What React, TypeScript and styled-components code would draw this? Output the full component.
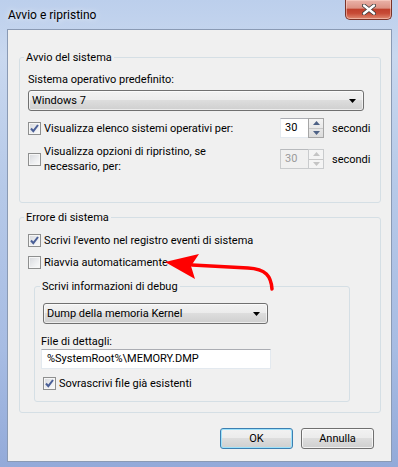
import styled, { createGlobalStyle } from 'styled-components';

const GlobalStyle = createGlobalStyle`
  html, body {
    margin: 0;
    padding: 0;
  }
  body {
    background: #ffffff;
    font-family: Roboto, "Liberation Sans", sans-serif;
    font-size: 11px;
    color: #000;
  }
`;

const Checkbox = ({ checked }: { checked?: boolean }) => (
    <StyledCheck>
        {checked && (
            <svg width="11" height="11" viewBox="0 0 11 11">
                <path d="M2 5.5 L4.3 8.2 L9 2" fill="none" stroke="#4a5f97" strokeWidth="2" />
            </svg>
        )}
    </StyledCheck>
);

const SpinBox = ({ value, disabled }: { value: string; disabled?: boolean }) => (
    <StyledSpin>
        <StyledSpinText $disabled={disabled}>{value}</StyledSpinText>
        <StyledSpinButtons $disabled={disabled}>
            <StyledSpinHalf>
                <svg width="7" height="4" viewBox="0 0 7 4">
                    <path d="M0 4 L3.5 0 L7 4 Z" fill={disabled ? '#c4c4c4' : '#4d6185'} />
                </svg>
            </StyledSpinHalf>
            <StyledSpinHalf>
                <svg width="7" height="4" viewBox="0 0 7 4">
                    <path d="M0 0 L7 0 L3.5 4 Z" fill={disabled ? '#c4c4c4' : '#4d6185'} />
                </svg>
            </StyledSpinHalf>
        </StyledSpinButtons>
    </StyledSpin>
);

const Combo = ({ text, width }: { text: string; width: number }) => (
    <StyledCombo $width={width}>
        <span>{text}</span>
        <svg width="7" height="4" viewBox="0 0 7 4">
            <path d="M0 0 L7 0 L3.5 4 Z" fill="#000" />
        </svg>
    </StyledCombo>
);

export default function App() {
    return (
        <>
            <GlobalStyle />
            <StyledWindow>
                <StyledTitleBar>
                    <StyledTitle>Avvio e ripristino</StyledTitle>
                    <StyledClose>
                        <svg width="14" height="11" viewBox="0 0 14 11">
                            <path d="M2 1.5 L12 9.5 M12 1.5 L2 9.5" stroke="#3a3a3a" strokeWidth="4" strokeLinecap="round" />
                            <path d="M2 1.5 L12 9.5 M12 1.5 L2 9.5" stroke="#ffffff" strokeWidth="2.4" strokeLinecap="round" />
                        </svg>
                    </StyledClose>
                </StyledTitleBar>

                <StyledClient>
                    <StyledGroup $mt={20} $pb={28}>
                        <StyledLegend>Avvio del sistema</StyledLegend>
                        <StyledLine $mt={7}>Sistema operativo predefinito:</StyledLine>
                        <StyledComboWrap $mt={3}>
                            <Combo text="Windows 7" width={336} />
                        </StyledComboWrap>
                        <StyledSpinRow $mt={7}>
                            <Checkbox checked />
                            <StyledRowLabel>Visualizza elenco sistemi operativi per:</StyledRowLabel>
                            <SpinBox value="30" />
                            <StyledUnit>secondi</StyledUnit>
                        </StyledSpinRow>
                        <StyledSpinRow $mt={6}>
                            <Checkbox />
                            <StyledRowLabel>
                                Visualizza opzioni di ripristino, se
                                <br />
                                necessario, per:
                            </StyledRowLabel>
                            <SpinBox value="30" disabled />
                            <StyledUnit>secondi</StyledUnit>
                        </StyledSpinRow>
                    </StyledGroup>

                    <StyledGroup $mt={7} $pb={10}>
                        <StyledLegend>Errore di sistema</StyledLegend>
                        <StyledCheckRow $mt={8}>
                            <Checkbox checked />
                            <span>Scrivi l'evento nel registro eventi di sistema</span>
                        </StyledCheckRow>
                        <StyledCheckRow $mt={7}>
                            <Checkbox />
                            <span>Riavvia automaticamente</span>
                        </StyledCheckRow>

                        <StyledInnerGroup>
                            <StyledLegend $inner>Scrivi informazioni di debug</StyledLegend>
                            <StyledComboWrap $mt={9} $ml={2}>
                                <Combo text="Dump della memoria Kernel" width={225} />
                            </StyledComboWrap>
                            <StyledLine $mt={10}>File di dettagli:</StyledLine>
                            <StyledTextField>%SystemRoot%\MEMORY.DMP</StyledTextField>
                            <StyledCheckRow $mt={7} $ml={2}>
                                <Checkbox checked />
                                <span>Sovrascrivi file già esistenti</span>
                            </StyledCheckRow>
                        </StyledInnerGroup>
                    </StyledGroup>

                    <StyledButtonBar>
                        <StyledButton $default>OK</StyledButton>
                        <StyledButton>Annulla</StyledButton>
                    </StyledButtonBar>
                </StyledClient>

                <StyledArrow width="120" height="45" viewBox="160 250 120 45">
                    <path d="M272 289 C271 276, 266 269, 248 268 L192 265" fill="none" stroke="#ff0000" strokeWidth="3.5" strokeLinecap="round" />
                    <path d="M165 262 L199 254 L191 266 L195 279 Z" fill="#ff0000" />
                </StyledArrow>
            </StyledWindow>
        </>
    );
}

const StyledWindow = styled.div`
    position: relative;
    box-sizing: border-box;
    width: 398px;
    height: 467px;
    padding: 0 6px 5px 7px;
    display: flex;
    flex-direction: column;
    background: linear-gradient(180deg, #bccfec 0%, #c9d8ef 12%, #b6c9e8 40%, #a7bce3 75%, #93aad9 100%);
`;

const StyledTitleBar = styled.div`
    height: 29px;
    display: flex;
    justify-content: space-between;
    align-items: flex-start;
`;

const StyledTitle = styled.div`
    margin: 8px 0 0 1px;
    line-height: 15px;
    font-size: 12px;
    color: #000;
    text-shadow: 0 0 6px rgba(255, 255, 255, 0.9);
`;

const StyledClose = styled.div`
    box-sizing: border-box;
    width: 47px;
    height: 20px;
    display: flex;
    align-items: center;
    justify-content: center;
    border: 1px solid #7a3328;
    border-top: none;
    border-radius: 0 0 5px 5px;
    background: linear-gradient(180deg, #eab3a9 0%, #dc9284 42%, #c0412d 50%, #c74b36 70%, #e08a71 100%);
    box-shadow: inset 0 0 0 1px rgba(255, 220, 210, 0.5);
`;

const StyledClient = styled.div`
    flex: 1;
    display: flex;
    flex-direction: column;
    background: #f0f0f0;
    border: 1px solid #8a9ab4;
    padding: 0 10px 0 11px;
`;

const StyledGroup = styled.fieldset<{ $mt: number; $pb: number }>`
    margin: ${p => p.$mt}px 0 0 0;
    padding: 0 16px ${p => p.$pb}px 8px;
    border: 1px solid #d5dfe5;
    border-radius: 3px;
    min-width: 0;
    display: flex;
    flex-direction: column;
`;

const StyledInnerGroup = styled.fieldset`
    margin: 9px 14px 0 6px;
    padding: 0 10px 10px 6px;
    border: 1px solid #d5dfe5;
    border-radius: 3px;
    min-width: 0;
    display: flex;
    flex-direction: column;
`;

const StyledLegend = styled.legend<{ $inner?: boolean }>`
    margin-left: ${p => (p.$inner ? -1 : -4)}px;
    padding: 0 2px;
    line-height: 15px;
`;

const StyledLine = styled.div<{ $mt: number }>`
    margin-top: ${p => p.$mt}px;
    line-height: 15px;
`;

const StyledComboWrap = styled.div<{ $mt: number; $ml?: number }>`
    margin-top: ${p => p.$mt}px;
    margin-left: ${p => p.$ml || 0}px;
`;

const StyledCombo = styled.div<{ $width: number }>`
    box-sizing: border-box;
    width: ${p => p.$width}px;
    height: 21px;
    display: flex;
    align-items: center;
    justify-content: space-between;
    padding: 0 7px 0 3px;
    border: 1px solid #707070;
    border-radius: 3px;
    background: linear-gradient(180deg, #f2f2f2 0%, #ebebeb 50%, #dddddd 50%, #cfcfcf 100%);
    box-shadow: inset 0 0 0 1px rgba(255, 255, 255, 0.6);
`;

const StyledCheckRow = styled.div<{ $mt: number; $ml?: number }>`
    margin-top: ${p => p.$mt}px;
    margin-left: ${p => p.$ml || 0}px;
    display: flex;
    align-items: center;
    gap: 3px;
    line-height: 15px;
`;

const StyledSpinRow = styled.div<{ $mt: number }>`
    margin-top: ${p => p.$mt}px;
    display: flex;
    align-items: center;
    gap: 3px;
    line-height: 15px;
`;

const StyledRowLabel = styled.span`
    flex: 0 0 233px;
`;

const StyledUnit = styled.span`
    margin-left: 5px;
`;

const StyledCheck = styled.span`
    box-sizing: border-box;
    flex: 0 0 13px;
    width: 13px;
    height: 13px;
    display: flex;
    align-items: center;
    justify-content: center;
    border: 1px solid #8e8f8f;
    background: linear-gradient(135deg, #d6d8dc 0%, #eeeff1 60%, #fbfbfb 100%);
    box-shadow: inset 0 0 0 1px #f6f6f6;
`;

const StyledSpin = styled.div`
    display: flex;
    height: 20px;
`;

const StyledSpinText = styled.div<{ $disabled?: boolean }>`
    box-sizing: border-box;
    width: 28px;
    height: 20px;
    padding-left: 4px;
    line-height: 18px;
    border: 1px solid ${p => (p.$disabled ? '#c9cbcd' : '#e3e9ef')};
    border-top-color: ${p => (p.$disabled ? '#b8babd' : '#abadb3')};
    border-right: none;
    background: ${p => (p.$disabled ? '#f0f0f0' : '#ffffff')};
    color: ${p => (p.$disabled ? '#9a9a9a' : '#000')};
`;

const StyledSpinButtons = styled.div<{ $disabled?: boolean }>`
    box-sizing: border-box;
    width: 16px;
    height: 20px;
    display: flex;
    flex-direction: column;
    border: 1px solid ${p => (p.$disabled ? '#c9cbcd' : '#a6a6a6')};
    background: ${p => (p.$disabled ? '#f4f4f4' : 'linear-gradient(180deg, #f4f4f4, #dcdcdc)')};
`;

const StyledSpinHalf = styled.div`
    flex: 1;
    display: flex;
    align-items: center;
    justify-content: center;
    & + & {
        border-top: 1px solid #c8c8c8;
    }
`;

const StyledTextField = styled.div`
    box-sizing: border-box;
    width: 230px;
    height: 20px;
    padding-left: 5px;
    line-height: 18px;
    border: 1px solid #e3e9ef;
    border-top-color: #abadb3;
    background: #ffffff;
`;

const StyledButtonBar = styled.div`
    margin: 15px 7px 0 0;
    display: flex;
    justify-content: flex-end;
    gap: 8px;
`;

const StyledButton = styled.button<{ $default?: boolean }>`
    box-sizing: border-box;
    width: 73px;
    height: 21px;
    padding: 0;
    font-family: inherit;
    font-size: 11px;
    color: #000;
    border: 1px solid ${p => (p.$default ? '#3c7fb1' : '#707070')};
    border-radius: 3px;
    background: linear-gradient(180deg, #f2f2f2 0%, #ebebeb 50%, #dddddd 50%, #cfcfcf 100%);
    box-shadow: inset 0 0 0 1px ${p => (p.$default ? '#9ee2fb' : 'rgba(255,255,255,0.7)')};
`;

const StyledArrow = styled.svg`
    position: absolute;
    left: 160px;
    top: 250px;
    pointer-events: none;
`;
